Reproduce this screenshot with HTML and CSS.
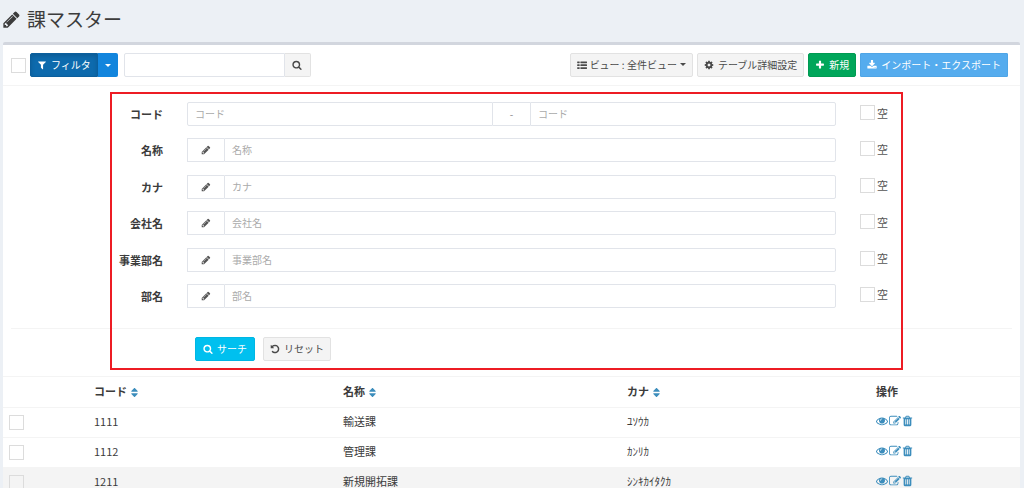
FILE: index.html
```html
<!DOCTYPE html>
<html lang="ja">
<head>
<meta charset="utf-8">
<title>課マスター</title>
<link rel="stylesheet" href="styles.css">
</head>
<body>
<svg class="sprite" aria-hidden="true">
  <symbol id="pencil" viewBox="0 0 1792 1792"><path d="M491 1536l91-91-235-235-91 91v107h128v128h107zm523-928q0-22-22-22-10 0-17 7l-542 542q-7 7-7 17 0 22 22 22 10 0 17-7l542-542q7-7 7-17zm-54-192l416 416-832 832h-416v-416zm683 96q0 53-37 90l-166 166-416-416 166-165q36-38 90-38 53 0 91 38l235 234q37 39 37 91z"/></symbol>
  <symbol id="filter" viewBox="0 0 1792 1792"><path d="M1595 295q17 41-14 70l-493 493v742q0 42-39 59-13 5-25 5-27 0-45-19l-256-256q-19-19-19-45v-486l-493-493q-31-29-14-70 17-39 59-39h1280q42 0 59 39z"/></symbol>
  <symbol id="search" viewBox="0 0 1792 1792"><path d="M1216 832q0-185-131.5-316.5t-316.5-131.5-316.5 131.5-131.5 316.5 131.5 316.5 316.5 131.5 316.5-131.5 131.5-316.5zm512 832q0 52-38 90t-90 38q-54 0-90-38l-343-342q-179 124-399 124-143 0-273.5-55.5t-225-150-150-225-55.5-273.5 55.5-273.5 150-225 225-150 273.500-55.5 273.500 55.500 225 150 150 225 55.500 273.500q0 220-124 399l343 343q37 37 37 90z"/></symbol>
  <symbol id="list" viewBox="0 0 1792 1792"><path d="M96 256h320q64 0 64 64v192q0 64-64 64h-320q-64 0-64-64v-192q0-64 64-64zm0 512h320q64 0 64 64v192q0 64-64 64h-320q-64 0-64-64v-192q0-64 64-64zm0 512h320q64 0 64 64v192q0 64-64 64h-320q-64 0-64-64v-192q0-64 64-64zM672 256h1056q64 0 64 64v192q0 64-64 64h-1056q-64 0-64-64v-192q0-64 64-64zm0 512h1056q64 0 64 64v192q0 64-64 64h-1056q-64 0-64-64v-192q0-64 64-64zm0 512h1056q64 0 64 64v192q0 64-64 64h-1056q-64 0-64-64v-192q0-64 64-64z"/></symbol>
  <symbol id="cog" viewBox="0 0 1792 1792"><path d="M1152 896q0-106-75-181t-181-75-181 75-75 181 75 181 181 75 181-75 75-181zm512-109v222q0 12-8 23t-20 13l-185 28q-19 54-39 91 35 50 107 138 10 12 10 25t-9 23q-27 37-99 108t-94 71q-12 0-26-9l-138-108q-44 23-91 38-16 136-29 186-7 28-36 28h-222q-14 0-24.5-8.500t-11.500-21.500l-28-184q-49-16-90-37l-141 107q-10 9-25 9-14 0-25-11-126-114-165-168-7-10-7-23 0-12 8-23 15-21 51-66.500t54-70.500q-27-50-41-99l-183-27q-13-2-21-12.500t-8-23.500v-222q0-12 8-23t19-13l186-28q14-46 39-92-40-57-107-138-10-12-10-24 0-10 9-23 26-36 98.500-107.500t94.500-71.500q13 0 26 10l138 107q44-23 91-38 16-136 29-186 7-28 36-28h222q14 0 24.500 8.500t11.500 21.500l28 184q49 16 90 37l142-107q9-9 24-9 13 0 25 10 129 119 165 170 7 8 7 22 0 12-8 23-15 21-51 66.500t-54 70.500q26 50 41 98l183 28q13 2 21 12.500t8 23.500z"/></symbol>
  <symbol id="plus" viewBox="0 0 1792 1792"><path d="M1600 736v192q0 40-28 68t-68 28h-416v416q0 40-28 68t-68 28h-192q-40 0-68-28t-28-68v-416h-416q-40 0-68-28t-28-68v-192q0-40 28-68t68-28h416v-416q0-40 28-68t68-28h192q40 0 68 28t28 68v416h416q40 0 68 28t28 68z"/></symbol>
  <symbol id="download" viewBox="0 0 1792 1792"><path d="M1344 1344q0-26-19-45t-45-19-45 19-19 45 19 45 45 19 45-19 19-45zm256 0q0-26-19-45t-45-19-45 19-19 45 19 45 45 19 45-19 19-45zm128-224v320q0 40-28 68t-68 28h-1472q-40 0-68-28t-28-68v-320q0-40 28-68t68-28h465l135 136q58 56 136 56t136-56l136-136h464q40 0 68 28t28 68zm-325-569q17 41-14 70l-448 448q-18 19-45 19t-45-19l-448-448q-31-29-14-70 17-39 59-39h256v-448q0-26 19-45t45-19h256q26 0 45 19t19 45v448h256q42 0 59 39z"/></symbol>
  <symbol id="undo" viewBox="0 0 1792 1792"><path d="M1664 896q0 156-61 298t-164 245-245 164-298 61q-172 0-327-72.500t-264-204.500q-7-10-6.500-22.500t8.500-20.500l137-138q10-9 25-9 16 2 23 12 73 95 179 147t225 52q104 0 198.500-40.500t163.500-109.500 109.500-163.500 40.500-198.500-40.500-198.500-109.500-163.500-163.500-109.500-198.500-40.500q-98 0-188 35.500t-160 101.500l137 138q31 30 14 69-17 40-59 40h-448q-26 0-45-19t-19-45v-448q0-42 40-59 39-17 69 14l130 129q107-101 244.500-156.500t284.500-55.500q156 0 298 61t245 164 164 245 61 298z"/></symbol>
  <symbol id="sort" viewBox="384 192 1024 1408"><path d="M1408 1088q0 26-19 45l-448 448q-19 19-45 19t-45-19l-448-448q-19-19-19-45t19-45 45-19h896q26 0 45 19t19 45zm0-384q0 26-19 45t-45 19h-896q-26 0-45-19t-19-45 19-45l448-448q19-19 45-19t45 19l448 448q19 19 19 45z"/></symbol>
  <symbol id="caret" viewBox="0 0 8 4"><path d="M0 0h8l-4 4z"/></symbol>
  <symbol id="eye" viewBox="0 0 1792 1792"><path d="M1664 960q-152-236-381-353 61 104 61 225 0 185-131.500 316.500t-316.500 131.500-316.500-131.500-131.500-316.500q0-121 61-225-229 117-381 353 133 205 333.500 326.500t434.500 121.500 434.500-121.500 333.500-326.500zm-720-384q0-20-14-34t-34-14q-125 0-214.500 89.500t-89.500 214.500q0 20 14 34t34 14 34-14 14-34q0-86 61-147t147-61q20 0 34-14t14-34zm848 384q0 34-20 69-140 230-376.500 368.500t-499.500 138.500-499.500-139-376.500-368q-20-35-20-69t20-69q140-229 376.500-368t499.500-139 499.500 139 376.500 368q20 35 20 69z"/></symbol>
  <symbol id="edit" viewBox="0 0 1792 1792"><path d="M888 1184l116-116-152-152-116 116v56h96v96h56zm440-720q-16-16-33 1l-350 350q-17 17-1 33t33-1l350-350q17-17 1-33zm80 594v190q0 119-84.500 203.500t-203.500 84.500h-832q-119 0-203.500-84.500t-84.500-203.500v-832q0-119 84.500-203.500t203.500-84.500h832q63 0 117 25 15 7 18 23 3 17-9 29l-49 49q-14 14-32 8-23-6-45-6h-832q-66 0-113 47t-47 113v832q0 66 47 113t113 47h832q66 0 113-47t47-113v-126q0-13 9-22l64-64q15-15 35-7t20 29zm-96-738l288 288-672 672h-288v-288zm444 132l-92 92-288-288 92-92q28-28 68-28t68 28l152 152q28 28 28 68t-28 68z"/></symbol>
  <symbol id="trash" viewBox="128 0 1536 1792"><path d="M704 1376v-704q0-14-9-23t-23-9h-64q-14 0-23 9t-9 23v704q0 14 9 23t23 9h64q14 0 23-9t9-23zm256 0v-704q0-14-9-23t-23-9h-64q-14 0-23 9t-9 23v704q0 14 9 23t23 9h64q14 0 23-9t9-23zm256 0v-704q0-14-9-23t-23-9h-64q-14 0-23 9t-9 23v704q0 14 9 23t23 9h64q14 0 23-9t9-23zm-544-992h448l-48-117q-7-9-17-11h-317q-10 2-17 11zm928 32v64q0 14-9 23t-23 9h-96v948q0 83-47 143.500t-113 60.500h-832q-66 0-113-58.500t-47-141.500v-952h-96q-14 0-23-9t-9-23v-64q0-14 9-23t23-9h309l70-167q15-37 54-63t79-26h320q40 0 79 26t54 63l70 167h309q14 0 23 9t9 23z"/></symbol>
</svg>

<header class="page-header">
  <svg class="title-icon"><use href="#pencil"/></svg>
  <h1>課マスター</h1>
</header>

<main class="box">
  <div class="toolbar">
    <input type="checkbox" class="check" aria-label="すべて選択">
    <div class="btn-group">
      <button type="button" class="btn btn-filter"><svg class="icon"><use href="#filter"/></svg>フィルタ</button>
      <button type="button" class="btn btn-toggle" aria-label="フィルタメニュー"><svg class="caret"><use href="#caret"/></svg></button>
    </div>
    <form class="quick-search">
      <input type="text" class="control" aria-label="検索">
      <button type="button" class="btn btn-default" aria-label="検索"><svg class="icon"><use href="#search"/></svg></button>
    </form>
    <div class="actions">
      <button type="button" class="btn btn-default btn-view"><svg class="icon"><use href="#list"/></svg>ビュー : 全件ビュー<svg class="caret"><use href="#caret"/></svg></button>
      <button type="button" class="btn btn-default"><svg class="icon"><use href="#cog"/></svg>テーブル詳細設定</button>
      <button type="button" class="btn btn-success"><svg class="icon"><use href="#plus"/></svg>新規</button>
      <button type="button" class="btn btn-import"><svg class="icon"><use href="#download"/></svg>インポート・エクスポート</button>
    </div>
  </div>

  <form class="filter">
    <div class="fields">
      <div class="field">
        <label class="name" for="code-from">コード</label>
        <div class="group">
          <input type="text" class="control" id="code-from" placeholder="コード">
          <span class="addon">-</span>
          <input type="text" class="control" placeholder="コード" aria-label="コード（終了）">
        </div>
        <label class="empty"><input type="checkbox" class="check">空</label>
      </div>
      <div class="field">
        <label class="name" for="name">名称</label>
        <div class="group"><span class="addon"><svg class="icon"><use href="#pencil"/></svg></span><input type="text" class="control" id="name" placeholder="名称"></div>
        <label class="empty"><input type="checkbox" class="check">空</label>
      </div>
      <div class="field">
        <label class="name" for="kana">カナ</label>
        <div class="group"><span class="addon"><svg class="icon"><use href="#pencil"/></svg></span><input type="text" class="control" id="kana" placeholder="カナ"></div>
        <label class="empty"><input type="checkbox" class="check">空</label>
      </div>
      <div class="field">
        <label class="name" for="company">会社名</label>
        <div class="group"><span class="addon"><svg class="icon"><use href="#pencil"/></svg></span><input type="text" class="control" id="company" placeholder="会社名"></div>
        <label class="empty"><input type="checkbox" class="check">空</label>
      </div>
      <div class="field">
        <label class="name" for="division">事業部名</label>
        <div class="group"><span class="addon"><svg class="icon"><use href="#pencil"/></svg></span><input type="text" class="control" id="division" placeholder="事業部名"></div>
        <label class="empty"><input type="checkbox" class="check">空</label>
      </div>
      <div class="field">
        <label class="name" for="department">部名</label>
        <div class="group"><span class="addon"><svg class="icon"><use href="#pencil"/></svg></span><input type="text" class="control" id="department" placeholder="部名"></div>
        <label class="empty"><input type="checkbox" class="check">空</label>
      </div>
    </div>
    <div class="submit">
      <button type="button" class="btn btn-info"><svg class="icon"><use href="#search"/></svg>サーチ</button>
      <button type="reset" class="btn btn-default"><svg class="icon"><use href="#undo"/></svg>リセット</button>
    </div>
    <div class="highlight"></div>
  </form>

  <table class="list">
    <colgroup><col class="c-check"><col class="c-code"><col class="c-name"><col class="c-kana"><col class="c-ops"></colgroup>
    <thead>
      <tr>
        <th></th>
        <th>コード<a href="#" class="sort" aria-label="コードで並べ替え"><svg><use href="#sort"/></svg></a></th>
        <th>名称<a href="#" class="sort" aria-label="名称で並べ替え"><svg><use href="#sort"/></svg></a></th>
        <th>カナ<a href="#" class="sort" aria-label="カナで並べ替え"><svg><use href="#sort"/></svg></a></th>
        <th>操作</th>
      </tr>
    </thead>
    <tbody>
      <tr>
        <td><input type="checkbox" class="check" aria-label="1111を選択"></td><td>1111</td><td>輸送課</td><td>ﾕｿｳｶ</td>
        <td><div class="ops"><a href="#" aria-label="表示"><svg><use href="#eye"/></svg></a><a href="#" aria-label="編集"><svg><use href="#edit"/></svg></a><a href="#" aria-label="削除"><svg class="trash"><use href="#trash"/></svg></a></div></td>
      </tr>
      <tr>
        <td><input type="checkbox" class="check" aria-label="1112を選択"></td><td>1112</td><td>管理課</td><td>ｶﾝﾘｶ</td>
        <td><div class="ops"><a href="#" aria-label="表示"><svg><use href="#eye"/></svg></a><a href="#" aria-label="編集"><svg><use href="#edit"/></svg></a><a href="#" aria-label="削除"><svg class="trash"><use href="#trash"/></svg></a></div></td>
      </tr>
      <tr class="hover">
        <td><input type="checkbox" class="check" aria-label="1211を選択"></td><td>1211</td><td>新規開拓課</td><td>ｼﾝｷｶｲﾀｸｶ</td>
        <td><div class="ops"><a href="#" aria-label="表示"><svg><use href="#eye"/></svg></a><a href="#" aria-label="編集"><svg><use href="#edit"/></svg></a><a href="#" aria-label="削除"><svg class="trash"><use href="#trash"/></svg></a></div></td>
      </tr>
    </tbody>
  </table>
</main>
</body>
</html>
```

FILE: styles.css
```css
* { box-sizing: border-box; }
body {
  margin: 0;
  height: 100vh;
  overflow: hidden;
  background: #ecf0f5;
  color: #3c3c3c;
  font: 11px/16px "Noto Sans CJK JP", sans-serif;
}
.sprite { display: none; }
svg { display: block; flex: none; fill: currentColor; }
button, input { font: inherit; color: inherit; margin: 0; }

.page-header {
  display: flex;
  align-items: center;
  gap: 6px;
  padding: 5px 2px 9px;
}
.page-header h1 { margin: 0; font-size: 19px; line-height: 28px; font-weight: 400; }
.title-icon { width: 19px; height: 19px; }

.box {
  margin: 0 4px 0 3px;
  background: #fff;
  border-top: 3px solid #d2d6de;
  border-radius: 2px 2px 0 0;
}

.check {
  appearance: none;
  flex: none;
  display: block;
  width: 15px;
  height: 15px;
  border: 1px solid #dcdcdc;
  background: #fff;
}

.toolbar {
  display: flex;
  align-items: center;
  padding: 8px 12px 8px 8px;
  border-bottom: 1px solid #f4f4f4;
}
.btn {
  display: inline-flex;
  align-items: center;
  justify-content: center;
  gap: 4px;
  height: 24px;
  padding: 0 6px 1px;
  border: 1px solid transparent;
  border-radius: 2px;
  font-size: 10px;
  line-height: 14px;
  white-space: nowrap;
}
.icon { width: 10px; height: 10px; }
.caret { width: 6px; height: 3px; }
.btn-default { background: #f4f4f4; border-color: #e2e2e2; color: #4a4a4a; }
.btn-success { background: #00a65a; border-color: #009a52; color: #fff; }
.btn-import { background: #55acee; border-color: #4fa5e6; color: #fff; border-radius: 1px; }
.btn-info { background: #00c0ef; border-color: #00b6e3; color: #fff; padding: 0 7px 1px; }
.btn-group { display: flex; margin: 0 6px 0 4px; }
.btn-filter {
  background: #0d6aad;
  border-color: #0b5f9d;
  color: #fff;
  border-radius: 2px 0 0 2px;
  box-shadow: inset 0 2px 4px rgba(0, 0, 0, 0.15);
}
.btn-toggle { width: 20px; padding: 0; background: #1285dd; color: #fff; border-radius: 0 2px 2px 0; }
.btn-view { gap: 3px; }

.quick-search { display: flex; }
.quick-search .control { flex: none; width: 161px; border-radius: 2px 0 0 2px; }
.quick-search .btn { width: 26px; padding: 0; border-left: 0; border-radius: 0 2px 2px 0; }
.actions { display: flex; gap: 4px; margin-left: auto; }

.control {
  flex: 1;
  min-width: 0;
  height: 24px;
  padding: 0 7px 1px;
  border: 1px solid #e1e4ea;
  border-radius: 0;
  background: #fff;
  font-size: 10px;
  line-height: 14px;
}
.control::placeholder { color: #aaa; opacity: 1; }

.filter { position: relative; padding: 16px 8px 15px; border-bottom: 1px solid #f4f4f4; }
.fields {
  display: flex;
  flex-direction: column;
  justify-content: space-between;
  min-height: 206px;
  margin-bottom: 20px;
}
.field {
  display: grid;
  grid-template-columns: 152px minmax(0, 1fr) 152px;
  gap: 24px;
  align-items: center;
}
.name { text-align: right; font-weight: 700; }
.group { display: flex; }
.group .control:last-child { border-radius: 0 2px 2px 0; }
.group .control:first-child { border-radius: 2px 0 0 2px; }
.addon {
  display: flex;
  align-items: center;
  justify-content: center;
  width: 37px;
  border: 1px solid #e1e4ea;
  border-width: 1px 0 1px 1px;
  font-size: 10px;
  line-height: 14px;
  color: #555;
}
.addon:nth-child(2) { border-left: 0; color: #888; }
.empty { display: flex; align-items: center; gap: 2px; padding-bottom: 3px; line-height: 14px; color: #555; }
.submit {
  display: flex;
  gap: 8px;
  padding: 8px 184px 0;
  border-top: 1px solid #f4f4f4;
}
.highlight {
  position: absolute;
  inset: 6px 117px 6px 107px;
  border: 2px solid #ed1c24;
  pointer-events: none;
}

.list { width: 100%; table-layout: fixed; border-collapse: collapse; }
.c-check { width: 85px; }
.c-code, .c-kana { width: 249px; }
.c-name { width: 284px; }
.c-ops { width: 150px; }
.list th, .list td {
  height: 30px;
  padding: 0 6px 2px;
  text-align: left;
  vertical-align: middle;
  border-bottom: 1px solid #f4f4f4;
}
.list td:first-child { padding-bottom: 0; }
.sort { display: inline-block; margin-left: 4px; color: #3c8dbc; vertical-align: middle; }
.sort svg { width: 7px; height: 9px; }
.hover, .hover .check { background: #f4f4f4; }
.ops { display: flex; gap: 1px; color: #3c8dbc; }
.ops a { color: inherit; }
.ops svg { width: 12px; height: 12px; }
.ops .trash { width: 11px; }
```
